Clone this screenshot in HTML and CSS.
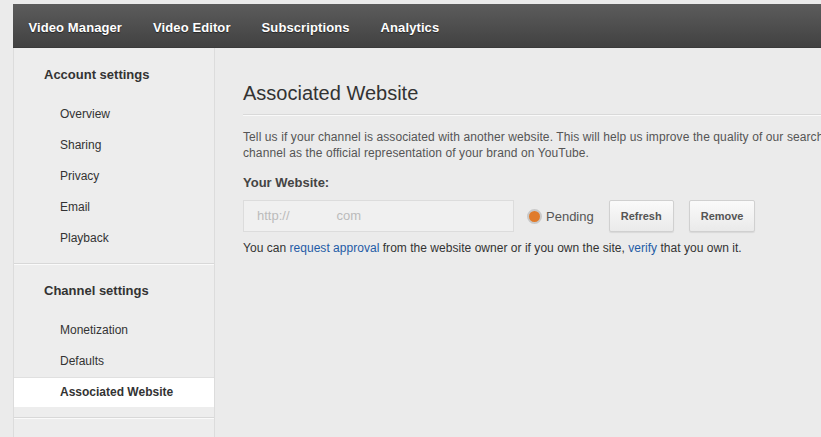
FILE: index.html
```html
<!DOCTYPE html>
<html lang="en">
<head>
    <meta charset="UTF-8">
    <title>Associated Website</title>
    <link rel="stylesheet" href="styles.css">
</head>
<body>
    <div class="page">
        <div class="topnav">
            <a href="#">Video Manager</a>
            <a href="#">Video Editor</a>
            <a href="#">Subscriptions</a>
            <a href="#">Analytics</a>
        </div>

        <div class="layout">
            <div class="sidebar">
                <div class="side-section">
                    <h3>Account settings</h3>
                    <ul>
                        <li><a href="#">Overview</a></li>
                        <li><a href="#">Sharing</a></li>
                        <li><a href="#">Privacy</a></li>
                        <li><a href="#">Email</a></li>
                        <li><a href="#">Playback</a></li>
                    </ul>
                </div>
                <div class="side-section">
                    <h3>Channel settings</h3>
                    <ul>
                        <li><a href="#">Monetization</a></li>
                        <li><a href="#">Defaults</a></li>
                        <li class="active"><a href="#">Associated Website</a></li>
                    </ul>
                </div>
                <div class="side-section empty"></div>
            </div>

            <div class="main">
                <h1>Associated Website</h1>
                <p class="intro">
                    Tell us if your channel is associated with another website. This will help us improve the quality of our search results and may allow us to show your<br>
                    channel as the official representation of your brand on YouTube.
                </p>

                <label class="field-label">Your Website:</label>
                <div class="site-row">
                    <div class="site-input"><span>http://</span><span class="tld">com</span></div>
                    <span class="status"><span class="dot"></span>Pending</span>
                    <button>Refresh</button>
                    <button>Remove</button>
                </div>
                <p class="help">You can <a href="#">request approval</a> from the website owner or if you own the site, <a href="#">verify</a> that you own it.</p>
            </div>
        </div>
    </div>
</body>
</html>
```

FILE: styles.css
```css
html, body {
    margin: 0;
    height: 100%;
    overflow: hidden;
}

body {
    background-color: #ebebeb;
    font-family: "Liberation Sans", Arial, sans-serif;
    color: #333;
}

.page {
    padding: 4px 0 0 13px;
    width: 1000px;
}

.topnav {
    display: flex;
    height: 44px;
    align-items: center;
    padding-top: 3px;
    box-sizing: border-box;
    background: linear-gradient(#5c5c5c, #414141);
    border-bottom: 1px solid #3a3a3a;
}

.topnav a {
    color: #fff;
    font-size: 13px;
    font-weight: bold;
    text-decoration: none;
    padding: 0 15.5px;
    letter-spacing: 0.1px;
    text-shadow: 0 1px 1px rgba(0, 0, 0, 0.5);
}

.layout {
    display: flex;
    height: 400px;
}

.sidebar {
    width: 200px;
    flex-shrink: 0;
    background-color: #ededed;
    border-left: 1px solid #dcdcdc;
    border-right: 1px solid #dcdcdc;
}

.side-section {
    padding: 19px 0 9px;
    border-bottom: 1px solid #d8d8d8;
    box-shadow: 0 1px 0 #fafafa;
}

.side-section.empty {
    border: none;
    box-shadow: none;
}

.side-section h3 {
    margin: 0 0 16px 30px;
    font-size: 13px;
    line-height: 16px;
    color: #333;
}

.side-section ul {
    list-style: none;
    margin: 0;
    padding: 0;
}

.side-section li {
    height: 31px;
    line-height: 31px;
    padding-left: 46px;
    font-size: 12px;
}

.side-section li a {
    color: #333;
    text-decoration: none;
}

.side-section li.active {
    background-color: #fff;
    border-top: 1px solid #e0e0e0;
    height: 29px;
    line-height: 28px;
    margin-bottom: 1px;
}

.side-section li.active a {
    font-weight: bold;
}

.main {
    padding: 33px 0 0 28px;
    flex: 1;
}

.main h1 {
    margin: 0;
    font-size: 20px;
    font-weight: normal;
    line-height: 24px;
    color: #333;
    padding-bottom: 9px;
    border-bottom: 1px solid #d9d9d9;
    box-shadow: 0 1px 0 #f9f9f9;
}

.intro {
    margin: 14px 0 0;
    font-size: 12px;
    line-height: 16px;
    color: #555;
    letter-spacing: 0.1px;
    white-space: nowrap;
}

.field-label {
    display: block;
    margin-top: 14px;
    font-size: 13px;
    font-weight: bold;
    line-height: 16px;
    color: #444;
}

.site-row {
    display: flex;
    align-items: center;
    margin-top: 9px;
}

.site-input {
    width: 256px;
    height: 30px;
    line-height: 30px;
    padding-left: 13px;
    background-color: #f0f0f0;
    border: 1px solid #dcdcdc;
    font-size: 13px;
    color: #bbb;
}

.site-input .tld {
    margin-left: 47px;
}

.status {
    display: flex;
    align-items: center;
    margin-left: 13px;
    font-size: 13px;
    color: #555;
}

.dot {
    width: 11px;
    height: 11px;
    border-radius: 50%;
    background-color: #e07b2b;
    border: 2px solid #c9c9c9;
    margin-right: 4px;
}

.site-row button {
    height: 32px;
    padding: 0 11px;
    margin-left: 15px;
    border: 1px solid #d0d0d0;
    border-radius: 2px;
    background: linear-gradient(#fafafa, #eaeaea);
    font-family: "Liberation Sans", Arial, sans-serif;
    font-size: 11px;
    font-weight: bold;
    color: #555;
    box-shadow: 0 1px 1px rgba(0, 0, 0, 0.08);
}

.help {
    margin: 8px 0 0;
    font-size: 12px;
    line-height: 16px;
    color: #333;
    letter-spacing: 0.03px;
}

.help a {
    color: #1f5ba6;
    text-decoration: none;
}
```
